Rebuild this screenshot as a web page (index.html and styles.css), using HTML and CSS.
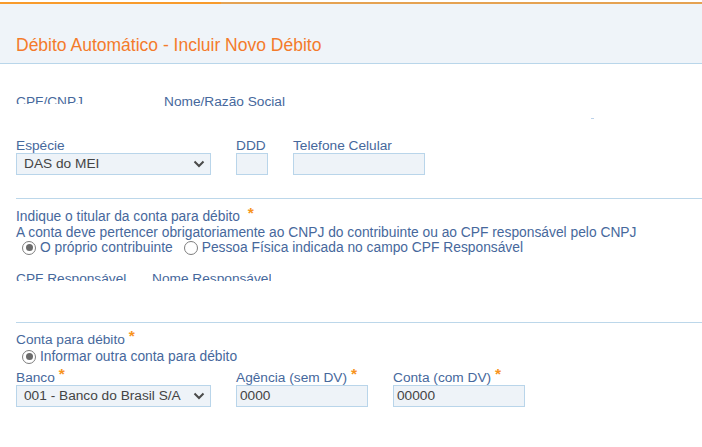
FILE: index.html
```html
<!DOCTYPE html>
<html lang="pt-BR">
	<head>
		<meta charset="utf-8">
		<meta name="viewport" content="width=device-width, initial-scale=1.0">
		<title>Débito Automático</title>
		<link rel="stylesheet" href="styles.css">
	</head>

	<body>
		<div class="topline"><i class="seg-a"></i><i class="seg-b"></i></div>
		<header class="page-head">
			<h1>Débito Automático - Incluir Novo Débito</h1>
		</header>

		<form class="form">
			<div class="row ident">
				<div class="field w148"><label class="cut">CPF/CNPJ</label></div>
				<div class="field"><label>Nome/Razão Social</label></div>
				<span class="speck"></span>
			</div>

			<div class="row">
				<div class="field w220">
					<label>Espécie</label>
					<div class="select w195">DAS do MEI
						<svg width="12" height="8" viewBox="0 0 12 8"><path d="M1.5 1.5 L6 6 L10.5 1.5" fill="none" stroke="#4a4a4a" stroke-width="2"/></svg>
					</div>
				</div>
				<div class="field w57">
					<label>DDD</label>
					<div class="input w32"></div>
				</div>
				<div class="field">
					<label>Telefone Celular</label>
					<div class="input w132"></div>
				</div>
			</div>

			<hr>

			<section class="titular">
				<p>Indique o titular da conta para débito <span class="req wide">*</span></p>
				<p>A conta deve pertencer obrigatoriamente ao CNPJ do contribuinte ou ao CPF responsável pelo CNPJ</p>
				<div class="radios">
					<span class="radio on"></span>O próprio contribuinte
					<span class="radio"></span>Pessoa Física indicada no campo CPF Responsável
				</div>
				<div class="row resp">
					<div class="field w136"><label class="cut">CPF Responsável</label></div>
					<div class="field"><label class="cut">Nome Responsável</label></div>
				</div>
			</section>

			<hr>

			<section class="conta">
				<label>Conta para débito <span class="req">*</span></label>
				<div class="radios">
					<span class="radio on"></span>Informar outra conta para débito
				</div>
				<div class="row">
					<div class="field w220">
						<label>Banco <span class="req">*</span></label>
						<div class="select w195">001 - Banco do Brasil S/A
							<svg width="12" height="8" viewBox="0 0 12 8"><path d="M1.5 1.5 L6 6 L10.5 1.5" fill="none" stroke="#4a4a4a" stroke-width="2"/></svg>
						</div>
					</div>
					<div class="field w157">
						<label>Agência (sem DV) <span class="req">*</span></label>
						<div class="input w132 val">0000</div>
					</div>
					<div class="field">
						<label>Conta (com DV) <span class="req">*</span></label>
						<div class="input w132 val">00000</div>
					</div>
				</div>
			</section>
		</form>
	</body>
</html>
```

FILE: styles.css
```css
body{
	margin: 0;
	background: white;
	font-family: "Liberation Sans", Arial, sans-serif;
	color: #46689c;
}
.topline{
	display: flex;
	margin-top: 2px;
	height: 2px;
}
.topline .seg-a{
	width: 221px;
	background: #f89b2c;
}
.topline .seg-b{
	flex: 1;
	background: #e5a252;
}
.page-head{
	height: 59px;
	background: #eff4f9;
	border-bottom: 1px solid #b9d6ea;
	padding: 0 16px;
}
h1{
	margin: 0;
	padding-top: 30px;
	font-size: 17.5px;
	line-height: 22px;
	font-weight: normal;
	color: #f47b2b;
}
.form{
	padding-left: 16px;
}
.row{
	display: flex;
	align-items: flex-start;
}
.field{
	display: flex;
	flex-direction: column;
}
label{
	display: block;
	font-size: 13.7px;
	line-height: 15px;
}
.cut{
	height: 10px;
	overflow: hidden;
}
.w136{ width: 136px; }
.w148{ width: 148px; }
.w157{ width: 157px; }
.w220{ width: 220px; }
.w57{ width: 57px; }
.w32{ width: 32px; }
.w132{ width: 132px; }
.w195{ width: 195px; }

.ident{
	position: relative;
	margin-top: 30px;
	height: 44px;
}
.speck{
	position: absolute;
	left: 575px;
	top: 24px;
	width: 3px;
	height: 1px;
	background: #bcd2ea;
}

.select, .input{
	box-sizing: border-box;
	height: 22px;
	background: #eef3f8;
	border: 1px solid #b9d5ea;
	font-size: 13.7px;
	line-height: 20px;
	color: #444;
}
.select{
	display: flex;
	justify-content: space-between;
	align-items: center;
	padding: 0 5px 0 7px;
}
.input.val{
	padding-left: 3px;
}

hr{
	margin: 23px 0 0;
	border: 0;
	border-top: 1px solid #bcd7ea;
}

.titular{
	padding-top: 10px;
	height: 90px;
}
.titular p{
	margin: 0;
	font-size: 13.8px;
	line-height: 15.5px;
}
.radios{
	display: flex;
	align-items: center;
	font-size: 13.8px;
	line-height: 15.5px;
	padding-left: 6px;
}
.radio{
	box-sizing: border-box;
	width: 14px;
	height: 14px;
	margin-right: 4px;
	border: 1.5px solid #7d7d7d;
	border-radius: 50%;
	display: flex;
	align-items: center;
	justify-content: center;
}
.radio:not(:first-child){
	margin-left: 11px;
}
.radio.on::after{
	content: "";
	width: 7px;
	height: 7px;
	border-radius: 50%;
	background: #6b6b6b;
}
.req{
	color: #f7941d;
	font-weight: bold;
	font-size: 15.5px;
	vertical-align: 3px;
	line-height: 0;
}
.req.wide{
	margin-left: 4px;
}
.resp{
	margin-top: 15px;
}

.conta{
	padding-top: 9px;
}
.conta .radios{
	margin: 2px 0 5px;
}
```
